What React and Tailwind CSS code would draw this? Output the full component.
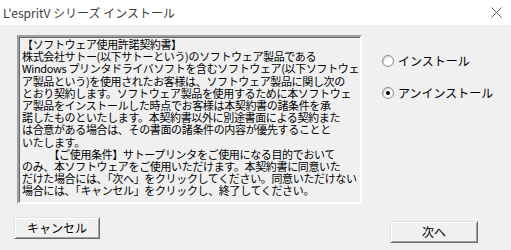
import { useState } from "react";

const jp = { fontFamily: '"Noto Sans CJK JP", "Noto Sans", sans-serif' };

const agreement = [
  "【ソフトウェア使用許諾契約書】",
  "株式会社サトー(以下サトーという)のソフトウェア製品である",
  "Windows プリンタドライバソフトを含むソフトウェア(以下ソフトウェ",
  "ア製品という)を使用されたお客様は、ソフトウェア製品に関し次の",
  "とおり契約します。ソフトウェア製品を使用するために本ソフトウェ",
  "ア製品をインストールした時点でお客様は本契約書の諸条件を承",
  "諾したものといたします。本契約書以外に別途書面による契約また",
  "は合意がある場合は、その書面の諸条件の内容が優先することと",
  "いたします。",
  "\u3000\u3000\u3000【ご使用条件】サトープリンタをご使用になる目的でおいて",
  "のみ、本ソフトウェアをご使用いただけます。本契約書に同意いた",
  "だけた場合には、「次へ」をクリックしてください。同意いただけない",
  "場合には、「キャンセル」をクリックし、終了してください。",
].join("\n");

function Radio({ label, checked, onSelect }) {
  return (
    <button
      type="button"
      onClick={onSelect}
      className="flex items-center gap-[4px] h-[14px] text-[12px] text-black"
    >
      <span className="w-[12px] h-[12px] rounded-full border border-[#8a8a8a] bg-white flex items-center justify-center shadow-[inset_1px_1px_0_#d0d0d0]">
        {checked && <span className="w-[4px] h-[4px] rounded-full bg-black" />}
      </span>
      <span className="leading-[14px]">{label}</span>
    </button>
  );
}

function WinButton({ children }) {
  return (
    <button
      type="button"
      className="w-full h-[22px] bg-[#f0f0f0] border border-t-[#e3e3e3] border-l-[#e3e3e3] border-r-[#696969] border-b-[#696969] shadow-[inset_1px_1px_0_#ffffff,inset_-1px_-1px_0_#a0a0a0] text-[12px] text-black flex items-center justify-center"
    >
      {children}
    </button>
  );
}

export default function App() {
  const [mode, setMode] = useState("uninstall");

  return (
    <div className="w-[511px] h-[250px] bg-[#f0f0f0] flex flex-col" style={jp}>
      <div className="h-[25px] bg-white flex items-center justify-between pl-[3px] pr-[9px]">
        <span className="text-[12px] text-[#3c3c3c]">L'espritV シリーズ インストール</span>
        <svg width="11" height="11" viewBox="0 0 11 11">
          <path d="M0.5 0.5 L10.5 10.5 M10.5 0.5 L0.5 10.5" stroke="#555" strokeWidth="1" />
        </svg>
      </div>

      <div className="flex-1 flex">
        <div className="w-[372px] flex flex-col">
          <div className="ml-[17px] mt-[10px] w-[345px] h-[169px] border-2 border-t-[#a0a0a0] border-l-[#a0a0a0] border-r-white border-b-white shadow-[inset_1px_1px_0_#696969] bg-[#f0f0f0] pl-[3px] pt-[1px] overflow-hidden">
            <p className="whitespace-pre text-[11px] leading-[12.2px] tracking-[-0.35px] text-black">
              {agreement}
            </p>
          </div>
          <div className="ml-[14px] mt-[13px] w-[86px]">
            <WinButton>キャンセル</WinButton>
          </div>
        </div>

        <div className="flex-1 flex flex-col pt-[29px] pl-[10px] pb-[7px]">
          <div className="flex flex-col gap-[18px]">
            <Radio label="インストール" checked={mode === "install"} onSelect={() => setMode("install")} />
            <Radio label="アンインストール" checked={mode === "uninstall"} onSelect={() => setMode("uninstall")} />
          </div>
          <div className="mt-auto ml-[8px] w-[88px]">
            <WinButton>次へ</WinButton>
          </div>
        </div>
      </div>
    </div>
  );
}
